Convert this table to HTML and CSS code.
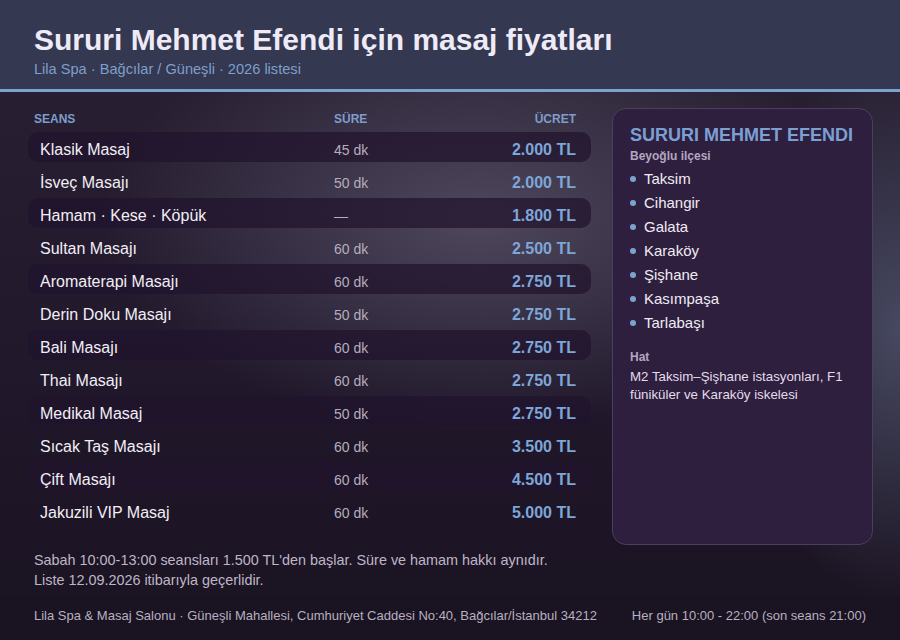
FILE: index.html
```html
<!DOCTYPE html>
<html lang="tr">
<head>
<meta charset="utf-8">
<title>Sururi Mehmet Efendi için masaj fiyatları</title>
<link rel="stylesheet" href="styles.css">
</head>
<body>
<div class="page">
  <header class="top">
    <h1 class="title">Sururi Mehmet Efendi için masaj fiyatları</h1>
    <div class="subtitle">Lila Spa · Bağcılar / Güneşli · 2026 listesi</div>
  </header>
  <main class="main">
    <section class="prices">
      <div class="thead">
        <span class="c-name">SEANS</span>
        <span class="c-dur">SÜRE</span>
        <span class="c-price">ÜCRET</span>
      </div>
      <div class="row alt"><span class="c-name">Klasik Masaj</span><span class="c-dur">45 dk</span><span class="c-price">2.000 TL</span></div>
      <div class="row"><span class="c-name">İsveç Masajı</span><span class="c-dur">50 dk</span><span class="c-price">2.000 TL</span></div>
      <div class="row alt"><span class="c-name">Hamam · Kese · Köpük</span><span class="c-dur">—</span><span class="c-price">1.800 TL</span></div>
      <div class="row"><span class="c-name">Sultan Masajı</span><span class="c-dur">60 dk</span><span class="c-price">2.500 TL</span></div>
      <div class="row alt"><span class="c-name">Aromaterapi Masajı</span><span class="c-dur">60 dk</span><span class="c-price">2.750 TL</span></div>
      <div class="row"><span class="c-name">Derin Doku Masajı</span><span class="c-dur">50 dk</span><span class="c-price">2.750 TL</span></div>
      <div class="row alt"><span class="c-name">Bali Masajı</span><span class="c-dur">60 dk</span><span class="c-price">2.750 TL</span></div>
      <div class="row"><span class="c-name">Thai Masajı</span><span class="c-dur">60 dk</span><span class="c-price">2.750 TL</span></div>
      <div class="row alt"><span class="c-name">Medikal Masaj</span><span class="c-dur">50 dk</span><span class="c-price">2.750 TL</span></div>
      <div class="row"><span class="c-name">Sıcak Taş Masajı</span><span class="c-dur">60 dk</span><span class="c-price">3.500 TL</span></div>
      <div class="row alt"><span class="c-name">Çift Masajı</span><span class="c-dur">60 dk</span><span class="c-price">4.500 TL</span></div>
      <div class="row"><span class="c-name">Jakuzili VIP Masaj</span><span class="c-dur">60 dk</span><span class="c-price">5.000 TL</span></div>
    </section>
    <aside class="side">
      <h2 class="side-title">SURURI MEHMET EFENDI</h2>
      <div class="side-label">Beyoğlu ilçesi</div>
      <ul class="places">
        <li>Taksim</li>
        <li>Cihangir</li>
        <li>Galata</li>
        <li>Karaköy</li>
        <li>Şişhane</li>
        <li>Kasımpaşa</li>
        <li>Tarlabaşı</li>
      </ul>
      <div class="side-label hat">Hat</div>
      <p class="transit">M2 Taksim–Şişhane istasyonları, F1 füniküler ve Karaköy iskelesi</p>
    </aside>
  </main>
  <div class="notes">
    <p>Sabah 10:00-13:00 seansları 1.500 TL'den başlar. Süre ve hamam hakkı aynıdır.</p>
    <p>Liste 12.09.2026 itibarıyla geçerlidir.</p>
  </div>
  <footer class="foot">
    <span>Lila Spa &amp; Masaj Salonu · Güneşli Mahallesi, Cumhuriyet Caddesi No:40, Bağcılar/İstanbul 34212</span>
    <span>Her gün 10:00 - 22:00 (son seans 21:00)</span>
  </footer>
</div>
</body>
</html>
```

FILE: styles.css
```css
* { box-sizing: border-box; }
html, body { margin: 0; padding: 0; }
body {
  width: 900px;
  height: 640px;
  overflow: hidden;
  font-family: "Liberation Sans", Arial, sans-serif;
  color: #ece6f2;
  background: #1d1526;
}
.page {
  width: 900px;
  height: 640px;
  display: flex;
  flex-direction: column;
  background:
    radial-gradient(ellipse 380px 210px at 480px 220px, rgba(120, 115, 138, 0.5), rgba(120, 115, 138, 0) 100%),
    radial-gradient(ellipse 170px 270px at 900px 330px, rgba(95, 105, 130, 0.6), rgba(95, 105, 130, 0) 100%),
    linear-gradient(180deg, #2a2133 0%, #22192d 50%, #1a1321 100%);
}
.top {
  height: 92px;
  background: #343850;
  border-bottom: 3px solid #7ba3d0;
  padding: 22px 34px 0;
}
.title {
  margin: 0;
  font-size: 30px;
  line-height: 36px;
  font-weight: 700;
  color: #eeeaf7;
}
.subtitle {
  margin-top: 1px;
  font-size: 14.6px;
  line-height: 20px;
  color: #7f9fcb;
}
.main {
  display: flex;
  gap: 21px;
  padding: 16px 27px 0 28px;
  height: 453px;
}
.prices {
  width: 563px;
  display: flex;
  flex-direction: column;
  gap: 3px;
}
.thead {
  display: flex;
  align-items: center;
  height: 20px;
  padding: 1px 15px 0 6px;
  font-size: 12px;
  font-weight: 700;
  color: #7d9dcb;
  margin-bottom: 1px;
}
.thead .c-name { width: 300px; }
.row {
  display: flex;
  align-items: center;
  height: 30px;
  padding: 5px 15px 0 12px;
  border-radius: 10px;
}
.row.alt { background: rgba(32, 20, 44, 0.72); }
.c-name { width: 294px; }
.row .c-name { font-size: 16px; color: #f2eef6; }
.c-dur { flex: 1; }
.row .c-dur { font-size: 14px; color: #b5adbe; }
.c-price { text-align: right; }
.row .c-price { font-size: 16px; font-weight: 700; color: #7ea6d8; }
.side {
  width: 261px;
  height: 437px;
  background: #2e1f3e;
  border: 1px solid #4d3d5f;
  border-radius: 14px;
  padding: 15px 17px;
}
.side-title {
  margin: 0;
  font-size: 18px;
  line-height: 22px;
  font-weight: 700;
  color: #7c9fd2;
}
.side-label {
  font-size: 12px;
  font-weight: 700;
  line-height: 16px;
  color: #b4a6c1;
  margin-top: 2px;
}
.places {
  list-style: none;
  margin: 2px 0 0;
  padding: 0;
}
.places li {
  display: flex;
  align-items: center;
  height: 24px;
  font-size: 15px;
  color: #f0ecf4;
}
.places li::before {
  content: "";
  width: 6px;
  height: 6px;
  border-radius: 50%;
  background: #7ba3d0;
  margin: 2px 8px 0 0;
}
.side-label.hat { margin-top: 15px; }
.transit {
  margin: 3px 0 0;
  font-size: 13.3px;
  line-height: 18px;
  color: #e4dcea;
}
.notes {
  padding: 5px 34px 0;
  height: 51px;
  font-size: 14.4px;
  line-height: 20px;
  color: #bfb6c8;
}
.notes p { margin: 0; }
.foot {
  height: 44px;
  background: #1a1422;
  display: flex;
  justify-content: space-between;
  align-items: center;
  padding: 0 34px 6px;
  font-size: 13px;
  color: #b8b0c0;
}
```
